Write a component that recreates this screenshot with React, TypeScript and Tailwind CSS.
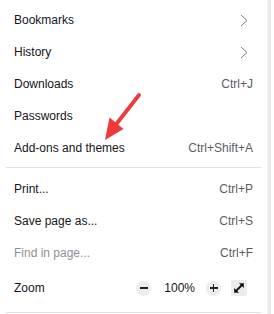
import React from "react";

const Chevron = () => (
  <svg width="8" height="13" viewBox="0 0 8 13" className="block">
    <path d="M1 1 L7 6.5 L1 12" fill="none" stroke="#7a7a82" strokeWidth="1" />
  </svg>
);

type Row = { label: string; right?: string; chevron?: boolean; disabled?: boolean };

const Item = ({ label, right, chevron, disabled }: Row) => (
  <div className="flex h-[32px] items-center justify-between px-[8px]">
    <span className={disabled ? "text-[#8f8f96]" : "text-[#16151b]"}>{label}</span>
    {chevron ? (
      <span className="mr-[5px]">
        <Chevron />
      </span>
    ) : right ? (
      <span className="text-[#5b5b66]">{right}</span>
    ) : null}
  </div>
);

const Sep = () => <div className="mt-[3px] mb-[5px] h-px bg-[#e0e0e6]" />;

export default function App() {
  return (
    <div
      className="relative flex h-[314px] w-[274px] overflow-hidden bg-white text-[12px]"
      style={{ fontFamily: '"Liberation Sans", Arial, sans-serif' }}
    >
      <div className="w-[267px] px-[6px] pt-[4px]">
        <Item label="Bookmarks" chevron />
        <Item label="History" chevron />
        <Item label="Downloads" right="Ctrl+J" />
        <Item label="Passwords" />
        <Item label="Add-ons and themes" right="Ctrl+Shift+A" />
        <Sep />
        <Item label="Print..." right="Ctrl+P" />
        <Item label="Save page as..." right="Ctrl+S" />
        <Item label="Find in page..." right="Ctrl+F" disabled />
        <div className="flex h-[38px] items-center justify-between px-[8px]">
          <span className="text-[#16151b]">Zoom</span>
          <div className="mr-[6px] flex items-center">
            <div className="flex h-[15px] w-[15px] items-center justify-center rounded-full bg-[#ededf0]">
              <div className="h-[1.5px] w-[8px] bg-[#222]" />
            </div>
            <span className="ml-[13px] mr-[11px] text-[#16151b]">100%</span>
            <div className="relative flex h-[15px] w-[15px] items-center justify-center rounded-full bg-[#ededf0]">
              <div className="absolute h-[1.5px] w-[8px] bg-[#222]" />
              <div className="absolute h-[8px] w-[1.5px] bg-[#222]" />
            </div>
            <div className="ml-[10px] flex h-[16px] w-[16px] items-center justify-center rounded-[2px] bg-[#ececef]">
              <svg width="12" height="12" viewBox="0 0 12 12">
                <path d="M3 9 L9 3" stroke="#111" strokeWidth="1.8" />
                <path d="M6 1.2 L10.8 1.2 L10.8 6 Z" fill="#111" />
                <path d="M1.2 6 L1.2 10.8 L6 10.8 Z" fill="#111" />
              </svg>
            </div>
          </div>
        </div>
        <div className="mt-[5px] h-px bg-[#e0e0e6]" />
      </div>
      <div className="w-[4px] bg-gradient-to-r from-[#f3f3f3] to-[#e6e6e6]" />
      <div className="flex-1 bg-white" />
      <svg className="pointer-events-none absolute left-0 top-0" width="274" height="314">
        <line x1="139" y1="95" x2="114" y2="127" stroke="#ee3a3a" strokeWidth="3.8" strokeLinecap="round" />
        <polygon points="105,140 109.5,117.5 123.5,129" fill="#ee3a3a" />
      </svg>
    </div>
  );
}
